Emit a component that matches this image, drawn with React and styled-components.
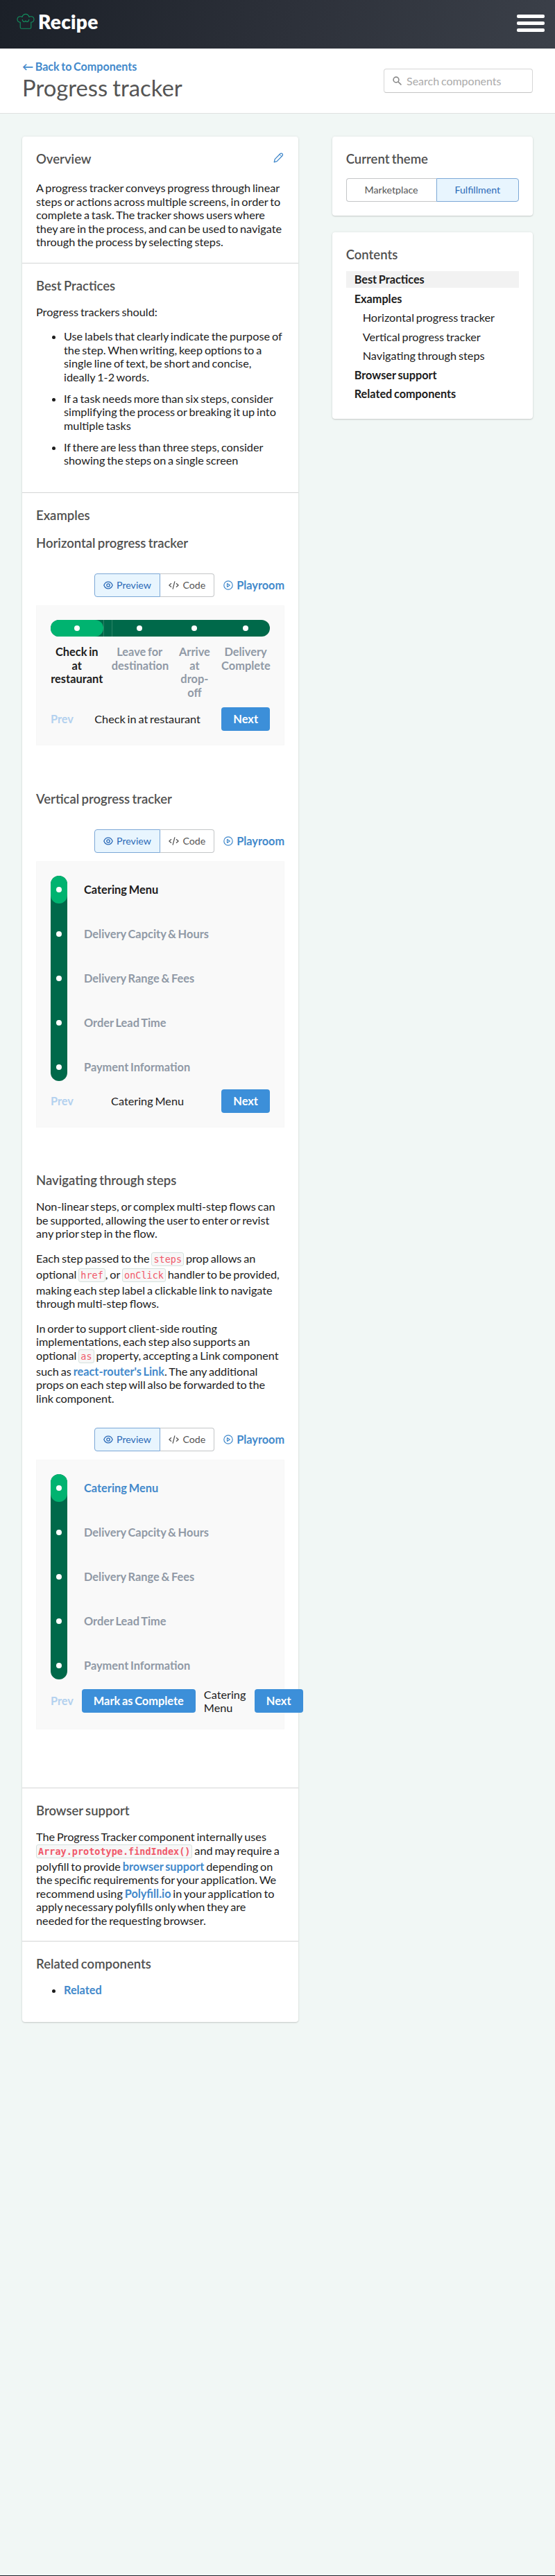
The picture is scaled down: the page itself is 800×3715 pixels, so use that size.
import React from "react";
import styled, { createGlobalStyle, css } from "styled-components";

const GlobalStyle = createGlobalStyle`
  *, *::before, *::after { box-sizing: border-box; }
  body {
    margin: 0;
    background: #f1f7f5;
    color: #1c1c1c;
    font-family: Lato, "Liberation Sans", sans-serif;
    font-size: 16.25px;
    line-height: 19.5px;
    word-spacing: -1.3px;
  }
  h1, h2, h3, p, ul { margin: 0; padding: 0; }
  a { color: #4289cb; font-weight: 700; text-decoration: none; }
  svg { display: block; flex: none; }
`;

const Page = styled.div`
  display: flex;
  flex-direction: column;
  height: 3715px;
`;

const TopBar = styled.header`
  display: flex;
  align-items: center;
  justify-content: space-between;
  height: 70px;
  padding: 0 15px 3px 24px;
  background: linear-gradient(105deg, #1b2028 0%, #2c3039 50%, #3b4049 100%);
`;

const Brand = styled.div`
  display: flex;
  align-items: center;
  gap: 5px;
  padding-bottom: 5px;
  color: #fff;
  font-size: 28px;
  font-weight: 800;
  letter-spacing: 0.3px;
  line-height: 32px;
`;

const MenuButton = styled.div`
  display: flex;
  flex-direction: column;
  gap: 5px;
  width: 40px;

  span {
    height: 5px;
    border-radius: 2px;
    background: #fff;
  }
`;

const TitleBar = styled.div`
  display: flex;
  align-items: center;
  justify-content: space-between;
  height: 94px;
  padding: 0 32px;
  background: #fff;
  border-bottom: 1px solid #dfe1e1;
`;

const Title = styled.h1`
  color: #555;
  font-size: 32.8px;
  font-weight: 400;
  line-height: 40px;
`;

const BackLink = styled.a`
  display: block;
  margin-bottom: 2px;
  font-size: 16.1px;
  line-height: 18px;
`;

const SearchBox = styled.div`
  display: flex;
  align-items: center;
  gap: 7px;
  width: 215px;
  height: 35px;
  padding: 0 12px;
  border: 1px solid #d6d6d6;
  border-bottom-color: #c4c4c4;
  border-radius: 4px;
  color: #ababab;
  font-size: 16px;
`;

const Columns = styled.main`
  display: flex;
  align-items: flex-start;
  justify-content: space-between;
  flex: 1;
  padding: 33px 32px 0;
`;

const Card = styled.section`
  border-radius: 4px;
  background: #fff;
  box-shadow: 0 1px 2px rgba(0, 0, 0, 0.16), 0 0 4px rgba(0, 0, 0, 0.06);
`;

const MainCard = styled(Card)`
  width: 398px;
`;

const Sidebar = styled.aside`
  display: flex;
  flex-direction: column;
  gap: 24px;
  width: 289.3px;
`;

const SideCard = styled(Card)`
  padding: 20px;
`;

const Section = styled.div`
  padding: 20px;

  & + & { border-top: 1px solid #d4d6d6; }
`;

const Heading = styled.h2`
  margin-bottom: ${(p) => p.$gap ?? 16}px;
  color: #505050;
  font-size: 18.5px;
  font-weight: 600;
  line-height: 24px;
`;

const HeadingRow = styled.div`
  display: flex;
  align-items: flex-start;
  justify-content: space-between;
  padding: 0 1px 4px 0;

  svg { margin-top: 3px; }
`;

const Para = styled.p`
  & + & { margin-top: 16px; }
`;

const BulletList = styled.ul`
  margin: 16px 0;
  padding-left: 40px;

  li + li { margin-top: 11.5px; }
`;

const Code = styled.code`
  display: inline-block;
  margin-bottom: 2.1px;
  padding: 0 2px;
  border: 1px solid #d5e2de;
  border-radius: 3px;
  background: #f7f7f7;
  color: #f0596a;
  font-family: "DejaVu Sans Mono", monospace;
  font-size: 13.5px;
  font-weight: ${(p) => (p.$bold ? 700 : 400)};
  line-height: 18px;
`;

const Toggle = styled.div`
  display: flex;
  height: 34px;
`;

const ToggleItem = styled.div`
  display: flex;
  flex: 1 1 auto;
  align-items: center;
  justify-content: center;
  gap: 5.5px;
  padding: 0 12px;
  border: 1px solid #c4c6c8;
  color: #555;
  font-size: 14.2px;

  &:first-child { border-radius: 4px 0 0 4px; border-right: 0; }
  &:last-child { border-radius: 0 4px 4px 0; border-left: 0; }

  ${(p) =>
    p.$active &&
    css`
      && { border: 1px solid #7ba7d6; }
      background: #e8f5fe;
      color: #2c6bb8;
    `}
`;

const DemoBar = styled.div`
  display: flex;
  align-items: center;
  justify-content: flex-end;
  gap: 13px;
  margin: ${(p) => p.$top}px 0 12px;
`;

const PlayLink = styled.a`
  display: flex;
  align-items: center;
  gap: 5px;
`;

const Demo = styled.div`
  margin-bottom: 64.5px;
  padding: 20px;
  border: 1px solid #f7f7f7;
  background: #f9f9f9;
`;

const DemoFooter = styled.div`
  display: flex;
  align-items: center;
  justify-content: space-between;
  gap: 12px;
  margin-top: 12px;
`;

const Button = styled.div`
  flex: none;
  padding: 7.25px 17px;
  border-radius: 4px;
  background: #3c8fd9;
  color: #fff;
  font-size: 16.4px;
  font-weight: 700;
  white-space: nowrap;
`;

const PrevLabel = styled.div`
  color: #b3d1ef;
  font-weight: 700;
`;

const CurrentStep = styled.div`
  min-width: 61px;
`;

const HTrack = styled.div`
  display: grid;
  grid-template-columns: 75.5px 81px 53px 70px;
  column-gap: 12.2px;
  border-radius: 12px;
  background: #00694a;
`;

const HLabels = styled(HTrack)`
  margin-top: 12px;
  background: none;
`;

const TrackCell = styled.div`
  position: relative;
  display: flex;
  align-items: center;
  justify-content: center;
  height: 24px;
  border-radius: 12px;
  background: ${(p) => (p.$active ? "#00b370" : "transparent")};
`;

const HCell = styled(TrackCell)`
  ${(p) =>
    p.$active &&
    css`
      &::after {
        content: "";
        position: absolute;
        top: 0;
        bottom: 0;
        left: 100%;
        width: 13px;
        border: solid #2c8466;
        border-width: 0 1px;
      }
    `}
`;

const VTrack = styled.div`
  display: flex;
  flex-direction: column;
  gap: 24px;
  width: 24px;
  border-radius: 12px;
  background: #00694a;
`;

const VCell = styled(TrackCell)`
  height: 40px;
`;

const Dot = styled.span`
  width: 8px;
  height: 8px;
  border-radius: 50%;
  background: #fff;
`;

const StepLabel = styled.div`
  color: ${(p) => p.$color ?? "#9099a6"};
  font-size: 16.4px;
  font-weight: 700;
  text-align: ${(p) => (p.$center ? "center" : "left")};
`;

const VTracker = styled.div`
  display: flex;
  gap: 24px;
`;

const VLabels = styled.div`
  display: flex;
  flex-direction: column;
  gap: 24px;

  > div { line-height: 40px; }
`;

const Toc = styled.nav`
  display: flex;
  flex-direction: column;
  gap: 4px;
  padding-bottom: 4px;
`;

const TocItem = styled.div`
  padding: 2px 12px 2px ${(p) => (p.$sub ? 24 : 12)}px;
  background: ${(p) => (p.$active ? "#f2f2f2" : "transparent")};
  font-weight: ${(p) => (p.$sub ? 400 : 700)};
`;

const Footer = styled.footer`
  height: 1px;
  background: #1d222b;
`;

const stroke = {
  fill: "none",
  stroke: "currentColor",
  strokeLinecap: "round",
  strokeLinejoin: "round",
};

const HatIcon = () => (
  <svg width="26" height="24" viewBox="0 0 26 24" {...stroke} stroke="#12905f" strokeWidth="1.1">
    <path d="M5.200 13.300v7.300a1.600 1.600 0 0 0 1.600 1.600h12.400a1.600 1.600 0 0 0 1.600-1.600v-7.300" />
    <path d="M5.200 13.300C2.700 13 1 11.300 1 9.100c0-2.500 1.900-4.300 4.500-4.300.9 0 1.800.2 2.500.7C8.700 3 10.600 1.400 13 1.400s4.300 1.600 5 4.100c.7-.5 1.600-.7 2.500-.7 2.600 0 4.500 1.800 4.500 4.300 0 2.200-1.700 3.900-4.200 4.200" />
    <path d="M8.200 9.200c.2 2 1.300 3.200 2.800 3.200 1.100 0 1.800-.6 2-1.500.2.900.9 1.500 2 1.500 1.500 0 2.600-1.200 2.800-3.200" />
  </svg>
);

const SearchIcon = () => (
  <svg width="13" height="13" viewBox="0 0 13 13" {...stroke} stroke="#8a8a8a" strokeWidth="1.6">
    <circle cx="5" cy="5" r="3.900" />
    <path d="M8 8l3.900 3.900" />
  </svg>
);

const PencilIcon = () => (
  <svg width="15" height="15" viewBox="0 0 15 15" {...stroke} stroke="#4289cb" strokeWidth="1.3">
    <path d="M1.200 13.800l1-4.200L9.900 1.800c.9-.9 2.100-1 3-.1s.8 2.100-.1 3L5.200 12.600z" />
    <path d="M9.100 2.700l2.800 2.900" strokeWidth="1" />
  </svg>
);

const EyeIcon = () => (
  <svg width="14" height="12" viewBox="0 0 14 12" {...stroke} strokeWidth="1.300">
    <path d="M.8 6C2 3 4.200 1.100 7 1.100S12 3 13.200 6C12 9 9.800 10.900 7 10.900S2 9 .8 6z" />
    <circle cx="7" cy="6" r="2.200" />
  </svg>
);

const CodeIcon = () => (
  <svg width="15" height="12" viewBox="0 0 15 12" {...stroke} strokeWidth="1.300">
    <path d="M3.700 3.600L.9 6l2.800 2.400M11.300 3.600L14.100 6l-2.800 2.400M8.800 .9L6.200 11.100" />
  </svg>
);

const PlayIcon = () => (
  <svg width="14" height="14" viewBox="0 0 14 14" {...stroke} strokeWidth="1.200">
    <circle cx="7" cy="7" r="6.200" />
    <path d="M5.500 4.600v4.800L9.300 7z" />
  </svg>
);

const DemoControls = ({ top = 32.2 }) => (
  <DemoBar $top={top}>
    <Toggle>
      <ToggleItem $active>
        <EyeIcon />
        Preview
      </ToggleItem>
      <ToggleItem>
        <CodeIcon />
        Code
      </ToggleItem>
    </Toggle>
    <PlayLink>
      <PlayIcon />
      Playroom
    </PlayLink>
  </DemoBar>
);

const horizontalSteps = [
  "Check in at restaurant",
  "Leave for destination",
  "Arrive at drop-off",
  "Delivery Complete",
];

const verticalSteps = [
  "Catering Menu",
  "Delivery Capcity & Hours",
  "Delivery Range & Fees",
  "Order Lead Time",
  "Payment Information",
];

const VerticalTracker = ({ activeColor }) => (
  <VTracker>
    <VTrack>
      {verticalSteps.map((s, i) => (
        <VCell key={s} $active={i === 0}>
          <Dot />
        </VCell>
      ))}
    </VTrack>
    <VLabels>
      {verticalSteps.map((s, i) => (
        <StepLabel key={s} $color={i === 0 ? activeColor : undefined}>
          {s}
        </StepLabel>
      ))}
    </VLabels>
  </VTracker>
);

const contents = [
  { label: "Best Practices", active: true },
  { label: "Examples" },
  { label: "Horizontal progress tracker", sub: true },
  { label: "Vertical progress tracker", sub: true },
  { label: "Navigating through steps", sub: true },
  { label: "Browser support" },
  { label: "Related components" },
];

export default function App() {
  return (
    <Page>
      <GlobalStyle />
      <TopBar>
        <Brand>
          <HatIcon />
          Recipe
        </Brand>
        <MenuButton>
          <span />
          <span />
          <span />
        </MenuButton>
      </TopBar>

      <TitleBar>
        <div>
          <BackLink>← Back to Components</BackLink>
          <Title>Progress tracker</Title>
        </div>
        <SearchBox>
          <SearchIcon />
          Search components
        </SearchBox>
      </TitleBar>

      <Columns>
        <MainCard>
          <Section>
            <HeadingRow>
              <Heading>Overview</Heading>
              <PencilIcon />
            </HeadingRow>
            <Para>
              A progress tracker conveys progress through linear steps or actions across multiple
              screens, in order to complete a task. The tracker shows users where they are in the
              process, and can be used to navigate through the process by selecting steps.
            </Para>
          </Section>

          <Section>
            <Heading>Best Practices</Heading>
            <Para>Progress trackers should:</Para>
            <BulletList>
              <li>
                Use labels that clearly indicate the purpose of the step. When writing, keep options
                to a single line of text, be short and concise, ideally 1-2 words.
              </li>
              <li>
                If a task needs more than six steps, consider simplifying the process or breaking it
                up into multiple tasks
              </li>
              <li>If there are less than three steps, consider showing the steps on a single screen</li>
            </BulletList>
          </Section>

          <Section>
            <Heading>Examples</Heading>
            <Heading as="h3" $gap={0}>Horizontal progress tracker</Heading>
            <DemoControls top={32.5} />
            <Demo>
              <HTrack>
                {horizontalSteps.map((s, i) => (
                  <HCell key={s} $active={i === 0}>
                    <Dot />
                  </HCell>
                ))}
              </HTrack>
              <HLabels>
                {horizontalSteps.map((s, i) => (
                  <StepLabel key={s} $center $color={i === 0 ? "#1c1c1c" : undefined}>
                    {s}
                  </StepLabel>
                ))}
              </HLabels>
              <DemoFooter>
                <PrevLabel>Prev</PrevLabel>
                <CurrentStep>Check in at restaurant</CurrentStep>
                <Button>Next</Button>
              </DemoFooter>
            </Demo>

            <Heading as="h3" $gap={0}>Vertical progress tracker</Heading>
            <DemoControls />
            <Demo>
              <VerticalTracker activeColor="#1c1c1c" />
              <DemoFooter>
                <PrevLabel>Prev</PrevLabel>
                <CurrentStep>Catering Menu</CurrentStep>
                <Button>Next</Button>
              </DemoFooter>
            </Demo>

            <Heading as="h3">Navigating through steps</Heading>
            <Para>
              Non-linear steps, or complex multi-step flows can be supported, allowing the user to
              enter or revist any prior step in the flow.
            </Para>
            <Para>
              Each step passed to the <Code>steps</Code> prop allows an optional <Code>href</Code>,
              or <Code>onClick</Code> handler to be provided, making each step label a clickable
              link to navigate through multi-step flows.
            </Para>
            <Para>
              In order to support client-side routing implementations, each step also supports an
              optional <Code>as</Code> property, accepting a Link component such as{" "}
              <a>react-router's Link</a>. The any additional props on each step will also be
              forwarded to the link&nbsp;component.
            </Para>
            <DemoControls />
            <Demo>
              <VerticalTracker activeColor="#4289cb" />
              <DemoFooter>
                <PrevLabel>Prev</PrevLabel>
                <Button>Mark as Complete</Button>
                <CurrentStep>Catering Menu</CurrentStep>
                <Button>Next</Button>
              </DemoFooter>
            </Demo>
          </Section>

          <Section>
            <Heading>Browser support</Heading>
            <Para>
              The Progress Tracker component internally uses{" "}
              <Code $bold>Array.prototype.findIndex()</Code> and may require a polyfill to provide{" "}
              <a>browser support</a> depending on the specific requirements for your application. We
              recommend using <a>Polyfill.io</a> in your application to apply necessary polyfills
              only when they are needed for the requesting browser.
            </Para>
          </Section>

          <Section>
            <Heading $gap={0}>Related components</Heading>
            <BulletList>
              <li>
                <a>Related</a>
              </li>
            </BulletList>
          </Section>
        </MainCard>

        <Sidebar>
          <SideCard>
            <Heading>Current theme</Heading>
            <Toggle>
              <ToggleItem>Marketplace</ToggleItem>
              <ToggleItem $active>Fulfillment</ToggleItem>
            </Toggle>
          </SideCard>
          <SideCard>
            <Heading $gap={12}>Contents</Heading>
            <Toc>
              {contents.map((item) => (
                <TocItem key={item.label} $sub={item.sub} $active={item.active}>
                  {item.label}
                </TocItem>
              ))}
            </Toc>
          </SideCard>
        </Sidebar>
      </Columns>
      <Footer />
    </Page>
  );
}
